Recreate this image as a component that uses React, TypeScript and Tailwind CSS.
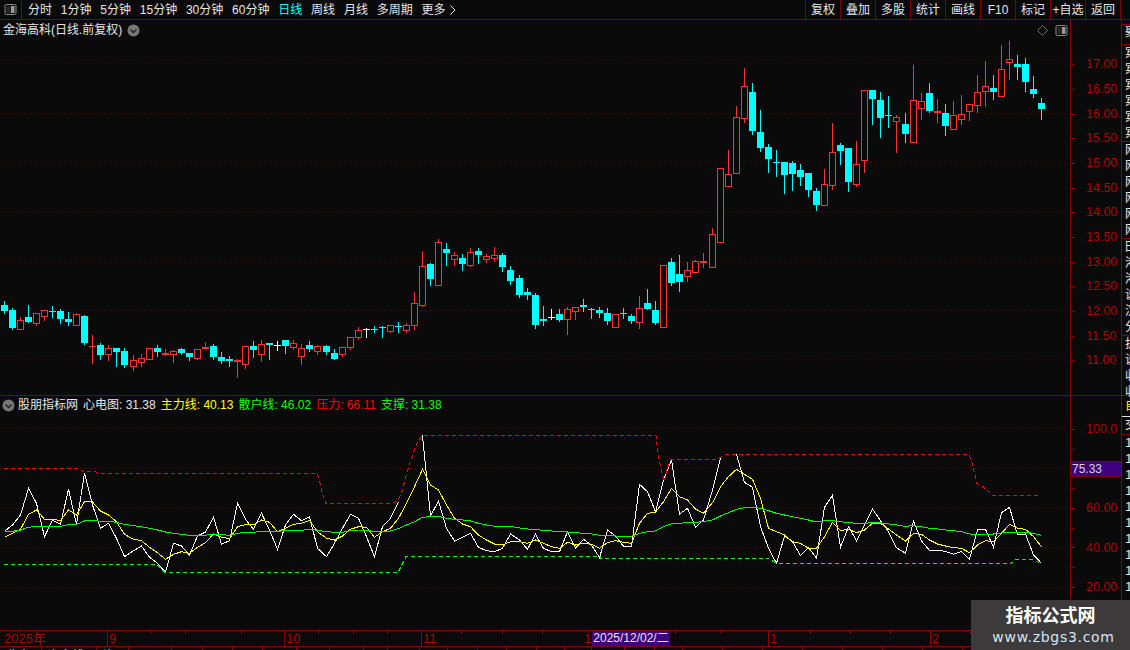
import React from "react";

type C = [string, number, number, number, number];
const RED = "#ff3232";
const CY = "#00ffff";

const z6: C[] = [["c",213,225,243,249],["c",234,240,294,297],["r",262,271,296,296],["c",225,261,276,276],["r",249,250,278,285],["r",240,241,257,270],["c",228,243,245,261],["c",237,243,267,279],["c",246,267,276,285],["r",249,253,284,284],["c",255,258,339,342],["r",315,348,351,399],["c",339,345,375,387],["r",345,355,372,390],["c",354,354,366,408],["c",354,363,405,411],["r",375,391,407,420],["r",372,385,395,408],["r",355,355,386,386],["c",345,354,366,378],["r",357,369,375,375],["r",360,364,371,396],["c",354,357,369,372],["c",369,369,381,390],["r",357,358,383,387],["r",336,351,357,357],["c",342,348,381,387],["c",366,381,393,399],["c",378,387,393,408],["r",387,390,396,441],["r",348,349,401,414],["c",333,348,360,381],["r",330,343,371,393],["c",339,339,345,387],["w",333,345,348,360],["c",330,330,348,369],["r",330,340,350,357],["r",342,355,377,402],["c",333,345,357,363],["r",345,349,362,372],["c",345,348,366,372],["c",357,369,387,387],["r",351,352,371,378],["r",321,322,350,357],
["r",291,301,320,327],["w",294,296,299,321],["c",288,296,300,306],["c",288,291,294,321],["r",285,286,302,306],["c",276,288,291,306],["r",279,286,299,306],["r",186,220,284,297],["r",63,109,224,228],["c",99,102,147,165],["r",27,37,164,164],["c",39,57,69,105],["r",66,76,86,105],["c",72,84,102,120],["r",54,67,104,107],["c",54,63,75,99],["r",72,79,86,96],["r",51,76,83,93],["c",69,75,111,123],["c",108,120,153,162],["c",135,144,195,201],["c",174,186,195,207],["c",189,195,285,294],["c",228,267,273,285],["w",237,261,264,267],["c",237,252,270,273],["r",231,238,266,312],["r",232,232,242,267],["c",207,225,231,243],["c",234,236,239,264],["c",231,240,249,261],["c",234,249,273,282],["r",253,253,290,290],["c",234,249,252,264],["c",252,258,273,279],["r",198,235,275,294],["c",177,219,237,237],["c",213,240,279,282],["r",106,106,290,290],["c",84,96,159,165],["c",75,132,156,183]];
const z12: C[] = [["r",787,811,829,843],["r",780,784,817,817],["r",759,783,789,801],["r",684,703,802,802],["r",505,505,727,727]];
const z8: C[] = [["r",330,403,437,437],["r",198,232,398,398],["r",84,139,233,246],["c",129,156,273,282],["c",210,276,324,333],["c",312,321,357,396],["c",330,366,369,408],["c",366,366,405,459],["c",363,369,402,450],["c",372,390,411,435],["c",399,399,450,468],["c",444,453,495,510],["r",387,433,494,494],["r",249,337,434,447],["c",309,315,333,372],["c",324,324,426,453],["r",303,373,431,438],["r",151,151,359,396],["c",150,150,177,252],["c",156,180,234,291],["c",168,225,228,261],["r",225,232,242,336],["c",219,252,282,306],["r",75,181,305,305],["r",159,184,203,237],["c",129,159,213,216],["r",177,213,218,246],["c",192,219,258,285],["r",183,226,266,266],["r",165,223,236,252],["r",192,193,212,240],["r",105,157,194,216],["r",63,139,152,198],["c",105,144,156,177],["r",15,88,167,167],["r",3,58,65,117],["c",45,72,81,117],["c",54,72,126,153],["c",108,147,162,171],["c",174,189,207,237]];

const conv = (list: C[], off: number): C[] => list.map(([t, a, b, c, d]) => [t, Math.round(a / 3 + off), Math.round(b / 3 + off), Math.round(c / 3 + off), Math.round(d / 3 + off)]);
const candles: C[] = [...conv(z6, 230), ...conv(z12, 0), ...conv(z8, 40)];
const cx = (i: number) => Math.floor(4.33 + 8.042 * i);

const white = [304,285,255,175,220,320,270,283,178,283,130,225,295,280,325,380,362,348,382,400,427,340,348,375,318,306,262,343,332,220,268,298,250,
300,358,285,253,272,260,355,380,340,295,253,265,320,380,290,265,215,130,45,16,258,213,295,333,322,310,352,362,365,355,312,330,358,313,355,365,365,305,355,328,345,383,300,318,349,350,163,185,245,
150,90,252,235,292,270,180,85,73,73,157,172,290,355,400,318,335,377,352,385,232,196,352,290,332,285,237,272,305,353,370,273,333,361,361,364,373,364,388,300,298,352,248,232,315,312,375,400];
const yellow = [322,310,298,253,240,268,268,272,240,255,215,216,243,255,275,313,328,332,352,368,388,373,365,370,352,338,312,322,326,290,284,285,270,
277,305,295,283,280,271,305,325,330,318,298,290,292,322,305,295,265,220,170,118,165,180,225,265,282,290,315,330,342,345,335,335,340,330,340,350,355,337,345,340,343,355,338,332,337,340,280,250,247,
215,175,200,210,237,250,218,170,140,118,133,148,205,295,305,315,335,340,355,355,320,277,302,298,308,300,280,280,297,315,333,310,313,330,342,348,353,355,368,345,332,335,310,283,295,298,320,350];
const green = [304,304,300,292,289,289,289,289,284,283,273,271,274,274,277,283,287,290,295,300,306,310,313,316,316,316,312,314,316,310,307,307,304,
304,304,302,301,301,298,301,305,307,307,302,300,300,306,304,303,296,285,275,262,260,259,265,268,270,273,280,285,289,289,289,294,297,299,301,303,305,306,308,310,312,316,316,318,319,319,310,305,303,
290,281,281,277,277,275,270,258,248,238,233,232,235,242,250,255,260,265,270,276,272,272,275,278,280,280,278,278,282,285,289,287,290,295,297,300,302,305,312,313,312,312,309,307,307,307,310,316];

const pts = (arr: number[], a: number, b: number) => {
  const out: string[] = [];
  for (let i = a; i <= b; i++) out.push(`${cx(i) + 0.5},${(430 + arr[i] / 3).toFixed(1)}`);
  return out.join(" ");
};

const redDash = "4,468.5 77,468.5 83,471 95,471.5 98,473.5 317,473.5 319,478 322,493 326,503.5 392,503.5 398,500.5 402,491 409,465 417,443 422,435.5 656,435.5 658,455 664,481.5 668,466.5 671,459.5 717,459.5 725,454.5 969,454.5 972,463 977,483.5 983,486.5 993,495.5 1041,495.5";
const greenDash = "4,564.5 157,564.5 165,572.5 398,572.5 406,556.5 600,556.5 600,558.5 768,558.5 777,563.5 1011,563.5 1016,559.5 1033,559.5 1041,563.5";

const FONT = "[font-family:'Liberation_Sans','Noto_Sans_CJK_SC',sans-serif]";

function SplitIcon() {
  return (
    <svg width="13" height="11" viewBox="0 0 13 11" className="shrink-0">
      <rect x="1" y="0.5" width="11" height="10" rx="1.5" fill="none" stroke="#8a8a8a" />
      <rect x="7" y="2" width="3.5" height="7" fill="#9a9a9a" />
      <rect x="2.5" y="2" width="4" height="7" fill="#2a2a2a" />
    </svg>
  );
}

function ChevCircle() {
  return (
    <svg width="13" height="13" viewBox="0 0 13 13" className="shrink-0">
      <circle cx="6.5" cy="6.5" r="6" fill="#777777" />
      <path d="M3.5 5.5 L6.5 8.5 L9.5 5.5" fill="none" stroke="#222222" strokeWidth="1.4" />
    </svg>
  );
}

function Candles() {
  return (
    <svg width="1070" height="376" viewBox="0 20 1070 376" shapeRendering="crispEdges" className="absolute left-0 top-0">
      {[63, 113, 162, 212, 261, 310, 359].map((y) => (
        <line key={y} x1="0" x2="1070" y1={y + 0.5} y2={y + 0.5} stroke="#6a0000" strokeDasharray="1 4" />
      ))}
      {candles.map(([t, h, top, bot, l], i) => {
        const c = cx(i);
        const col = t === "c" ? CY : t === "w" ? "#ffffff" : RED;
        const thin = bot - top <= 2;
        const parts: React.ReactNode[] = [];
        parts.push(<rect key="a" x={c} y={h} width="1" height={Math.max(top - h, 0)} fill={col} />);
        parts.push(<rect key="b" x={c} y={bot} width="1" height={Math.max(l - bot + 1, 0)} fill={col} />);
        if (t === "r" && !thin) {
          parts.push(<rect key="d" x={c - 2.5} y={top + 0.5} width="6" height={bot - top} fill="#0a0a0a" stroke={col} />);
        } else {
          parts.push(<rect key="d" x={c - 3} y={top} width="7" height={Math.max(bot - top, 1)} fill={col} />);
        }
        return <g key={i}>{parts}</g>;
      })}
    </svg>
  );
}

function Indicator() {
  const line = { fill: "none", strokeWidth: 1 };
  return (
    <svg width="1070" height="234" viewBox="0 396 1070 234" shapeRendering="crispEdges" className="absolute left-0 top-0">
      {[428, 468, 507, 547, 587].map((y) => (
        <line key={y} x1="0" x2="1070" y1={y + 0.5} y2={y + 0.5} stroke="#6a0000" strokeDasharray="1 4" />
      ))}
      <polyline {...line} stroke="#ffffff" points={pts(white, 0, 49)} />
      <polyline {...line} stroke="#ffffff" points={pts(white, 52, 89)} />
      <polyline {...line} stroke="#ffffff" points={pts(white, 91, 129)} />
      <polyline {...line} stroke="#ffff00" points={pts(yellow, 0, 129)} />
      <polyline {...line} stroke="#00ff00" points={pts(green, 0, 129)} />
      <polyline {...line} stroke="#ff0000" strokeDasharray="4 3" points={redDash} />
      <polyline {...line} stroke="#00ff00" strokeDasharray="4 3" points={greenDash} />
    </svg>
  );
}

const leftTabs = ["分时", "1分钟", "5分钟", "15分钟", "30分钟", "60分钟", "日线", "周线", "月线", "多周期"];
const rightBtns = ["复权", "叠加", "多股", "统计", "画线", "F10", "标记", "+自选", "返回"];
const upperLabels = ["17.00", "16.50", "16.00", "15.50", "15.00", "14.50", "14.00", "13.50", "13.00", "12.50", "12.00", "11.50", "11.00"];
const lowerRows = ["100.0", "", "", "", "60.00", "", "40.00", "", "20.00"];
const segs: [number, string][] = [[107, "2025年"], [177, "9"], [137, "10"], [162, "11"], [185, "1"], [162, "1"], [200, "2"]];
const strip: [number, string, string][] = [[42, "收盘", "text-[#e6e6e6]"], [55, "主力线", "text-[#ffff00]"], [32, "资", "text-[#e6e6e6]"], [43, "", ""], [31, "", ""], [30, "", ""], [30, "", ""], [34, "", ""], [33, "", ""], [34, "", ""], [24, "", ""], [32, "", ""], [28, "", ""], [30, "", ""], [29, "", ""], [30, "", ""], [28, "", ""], [27, "", ""], [33, "", ""], [30, "", ""], [28, "", ""], [40, "", ""], [40, "", ""], [40, "", ""], [40, "", ""], [40, "", ""], [40, "", ""], [40, "", ""]];
const sideA = ["宾", "宾", "宾", "宾", "宾", "宾"];
const sideB = ["网", "网", "网", "网", "网", "网"];
const sideC = ["田", "港", "港", "说", "沉", "分"];
const sideD = ["护", "说", "收", "收"];

function Side({ list, className }: { list: string[]; className?: string }) {
  return (
    <div className={`flex flex-col border-b border-[#8a0000] ${className ?? ""}`}>
      {list.map((s, i) => (
        <div key={i} className="h-4 leading-4 text-[12px] text-[#e6e6e6] whitespace-nowrap">{s}</div>
      ))}
    </div>
  );
}

export default function App() {
  return (
    <div className={`relative w-[1130px] h-[650px] overflow-hidden bg-[#0a0a0a] flex flex-col text-[12px] text-[#e6e6e6] ${FONT}`}>
      {/* toolbar */}
      <div className="h-5 shrink-0 flex items-center border-b border-[#800000]">
        <div className="w-[22px] h-full flex items-center justify-center border-r border-[#800000]">
          <SplitIcon />
        </div>
        <div className="flex items-center gap-[8.8px] pl-[6px]">
          {leftTabs.map((t) => (
            <span key={t} className={t === "日线" ? "text-[#00ffff]" : ""}>{t}</span>
          ))}
          <span className="flex items-center gap-[4px]">
            更多
            <svg width="6" height="10" viewBox="0 0 6 10"><path d="M0.5 0.5 L5 5 L0.5 9.5" fill="none" stroke="#e6e6e6" /></svg>
          </span>
        </div>
        <div className="ml-auto flex h-full border-r border-[#800000] mr-[9px]">
          {rightBtns.map((b) => (
            <div key={b} className="w-[35px] h-full flex items-center justify-center border-l border-[#800000] whitespace-nowrap">{b}</div>
          ))}
        </div>
      </div>

      {/* body */}
      <div className="flex h-[610px] shrink-0">
        <div className="w-[1070px] flex flex-col shrink-0">
          <div className="relative h-[376px] border-b border-[#800000]">
            <Candles />
            <div className="relative flex items-center h-5 pl-[3px] gap-[5px]">
              <span>金海高科(日线.前复权)</span>
              <ChevCircle />
              <span className="ml-auto mr-[2px] flex items-center gap-[7px]">
                <svg width="11" height="11" viewBox="0 0 11 11"><path d="M5.5 0.5 L10.5 5.5 L5.5 10.5 L0.5 5.5 Z" fill="none" stroke="#6e6e6e" /></svg>
                <SplitIcon />
              </span>
            </div>
          </div>
          <div className="relative flex-1">
            <Indicator />
            <div className="relative flex items-center h-[18px] pl-[2px] whitespace-nowrap">
              <ChevCircle />
              <span className="ml-[3px]">股朋指标网</span>
              <span className="ml-[5px]">心电图: 31.38</span>
              <span className="ml-[5px] text-[#ffff00]">主力线: 40.13</span>
              <span className="ml-[5px] text-[#00ff00]">散户线: 46.02</span>
              <span className="ml-[5px] text-[#ff0000]">压力: 66.11</span>
              <span className="ml-[5px] text-[#00ff00]">支撑: 31.38</span>
            </div>
          </div>
        </div>

        {/* price axis */}
        <div className="w-[51px] shrink-0 flex flex-col border-l border-[#8a0000] text-[#b00000] text-[12.5px]">
          <div className="relative h-[376px] border-b border-[#800000] pt-[32.5px] box-border">
            {upperLabels.map((l) => (
              <div key={l} className="h-[24.67px] flex items-center">
                <span className="w-1 h-px bg-[#8a0000]" />
                <span className="ml-[11px]">{l}</span>
              </div>
            ))}
          </div>
          <div className="relative flex-1 pt-[23.5px]">
            {lowerRows.map((l, i) => (
              <div key={i} className="h-[19.75px] flex items-center">
                <span className="w-1 h-px bg-[#8a0000]" />
                <span className="ml-[11px]">{l}</span>
              </div>
            ))}
            <div className="absolute left-0 top-[65px] w-[50px] h-4 box-border border-y border-[#800000] bg-[#3d0080] text-[#d8d8d8] text-[12px] leading-[14px] pl-px">75.33</div>
          </div>
        </div>

        {/* clipped side column */}
        <div className="w-[9px] shrink-0 ml-auto border-l border-[#8a0000] overflow-hidden pl-[3px] flex flex-col">
          <div className="h-[5px] border-b border-[#8a0000] -ml-[3px]" />
          <Side list={["聚"]} className="h-[20px] -ml-[3px] pl-[3px]" />
          <Side list={sideA} className="h-[97px] -ml-[3px] pl-[3px]" />
          <Side list={sideB} className="h-[97px] -ml-[3px] pl-[3px]" />
          <Side list={sideC} className="h-[97px] -ml-[3px] pl-[3px]" />
          <Side list={sideD} className="h-[60px] -ml-[3px] pl-[3px]" />
          <div className="h-[21px] -ml-[3px] pl-[3px] border-b border-[#e6e6e6] text-[#ffff00] leading-5">自</div>
          <div className="h-[18px] -ml-[3px] pl-[3px] border-b border-[#8a0000] leading-4">交</div>
          {Array.from({ length: 10 }).map((_, i) => (
            <div key={i} className="h-4 leading-4 whitespace-nowrap text-[13px]">1</div>
          ))}
        </div>
      </div>

      {/* date axis */}
      <div className="relative h-[15px] shrink-0 border-y border-[#8a0000] flex text-[#b00000] text-[13px] leading-[15px] box-content">
        <svg width="1070" height="3" className="absolute left-0 top-0" shapeRendering="crispEdges">
          {[151, 185, 241, 318, 353, 387, 461, 502, 542, 675, 720, 810, 850, 890, 970].map((x) => (
            <line key={x} x1={x + 0.5} x2={x + 0.5} y1="0" y2="3" stroke="#8a0000" />
          ))}
        </svg>
        {segs.map(([w, t], i) => (
          <div key={i} style={{ width: w }} className={`h-full shrink-0 ${i === 0 ? "pl-[4px]" : "pl-px"} ${i > 0 && i !== 4 ? "border-l border-[#8a0000]" : ""}`}>{t}</div>
        ))}
        <div className="absolute left-[592px] top-0 w-[78px] h-full bg-[#3d0080] text-[#e6e6e6] text-[12px] text-center">2025/12/02/二</div>
      </div>

      {/* clipped status strip */}
      <div className="h-[3px] overflow-hidden flex shrink-0">
        {strip.map(([w, t, c], i) => (
          <div key={i} style={{ width: w }} className={`h-full shrink-0 border-r border-[#8a0000] pl-[6px] text-[12px] leading-[19px] whitespace-nowrap ${c}`}>{t}</div>
        ))}
      </div>

      {/* watermark */}
      <div className="absolute right-0 bottom-0 w-[159px] h-[50px] bg-[#3c3a3a] flex flex-col items-center justify-center">
        <div className="text-[18px] leading-[24px] font-bold text-white">指标公式网</div>
        <div className="ml-[6px] text-[14px] leading-[18px] tracking-[0.7px] text-[#d5e4f7] [font-family:'DejaVu_Sans',sans-serif]">www.zbgs3.com</div>
      </div>
    </div>
  );
}
